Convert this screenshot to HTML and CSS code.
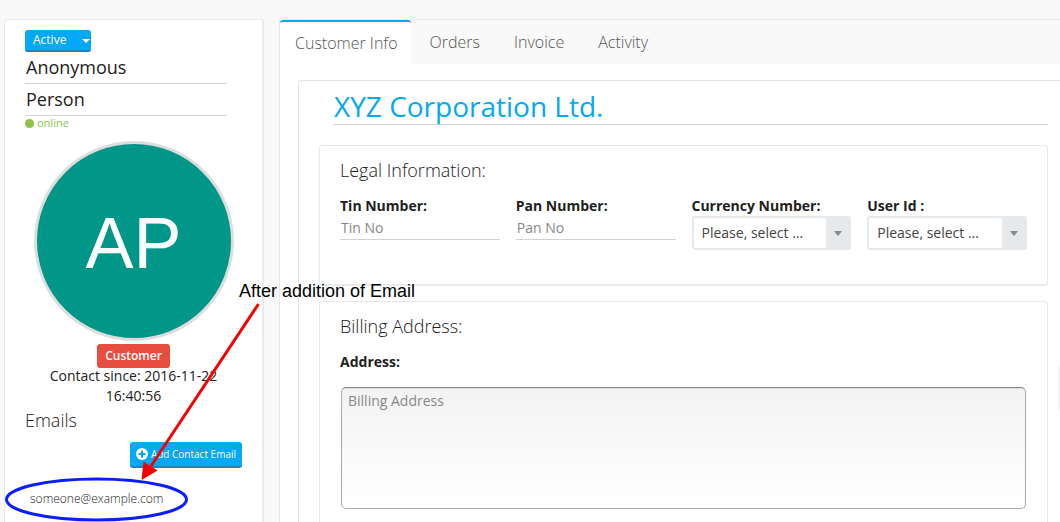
FILE: index.html
```html
<!DOCTYPE html>
<html lang="en">
<head>
<meta charset="utf-8">
<meta name="viewport" content="width=device-width, initial-scale=1">
<title>Customer Info</title>
<link rel="stylesheet" href="styles.css">
</head>
<body>
<div class="page">
  <aside class="profile">
    <button class="status" type="button">
      <span class="status-label">Active</span>
      <span class="status-toggle"><svg width="8" height="4" viewBox="0 0 8 4" aria-hidden="true"><path d="M0 0h8L4 4z" fill="#fff"/></svg></span>
    </button>
    <div class="names">
      <input class="line-input name" type="text" aria-label="First name" value="Anonymous">
      <input class="line-input name" type="text" aria-label="Last name" value="Person">
    </div>
    <div class="presence"><span class="dot"></span>online</div>
    <div class="avatar">AP</div>
    <span class="badge">Customer</span>
    <p class="since">Contact since: 2016-11-22 16:40:56</p>
    <h2 class="section-title">Emails</h2>
    <button class="add-email" type="button">
      <svg width="12" height="12" viewBox="0 0 12 12" aria-hidden="true"><circle cx="6" cy="6" r="6" fill="#fff"/><path d="M6 2.6v6.8M2.6 6h6.8" stroke="#03a9f4" stroke-width="2"/></svg>
      Add Contact Email
    </button>
    <a class="email" href="mailto:someone@example.com">someone@example.com</a>
  </aside>

  <main class="main">
    <nav class="tabs">
      <a class="tab active" href="#info">Customer Info</a>
      <a class="tab" href="#orders">Orders</a>
      <a class="tab" href="#invoice">Invoice</a>
      <a class="tab" href="#activity">Activity</a>
    </nav>
    <div class="panel" id="info">
      <input class="line-input company" type="text" aria-label="Company" value="XYZ Corporation Ltd.">
      <section class="card legal">
        <h2 class="section-title">Legal Information:</h2>
        <div class="fields">
          <div class="field">
            <label for="tin">Tin Number:</label>
            <input class="line-input" id="tin" type="text" placeholder="Tin No">
          </div>
          <div class="field">
            <label for="pan">Pan Number:</label>
            <input class="line-input" id="pan" type="text" placeholder="Pan No">
          </div>
          <div class="field">
            <label for="currency">Currency Number:</label>
            <div class="select-box"><select id="currency"><option>Please, select ...</option></select></div>
          </div>
          <div class="field">
            <label for="user">User Id :</label>
            <div class="select-box"><select id="user"><option>Please, select ...</option></select></div>
          </div>
        </div>
      </section>
      <section class="card billing">
        <h2 class="section-title">Billing Address:</h2>
        <label for="address">Address:</label>
        <textarea id="address" placeholder="Billing Address"></textarea>
      </section>
    </div>
  </main>

  <svg class="marks" width="270" height="522" viewBox="0 0 270 522" aria-hidden="true">
    <path d="M258.500 304L151 466" stroke="#f60000" stroke-width="3" fill="none"/>
    <path d="M141.500 480L143.500 461.500L157.500 470.500z" fill="#f60000"/>
    <ellipse cx="96.500" cy="499.500" rx="90" ry="20.500" fill="none" stroke="#0a1eff" stroke-width="3"/>
  </svg>
  <span class="note">After addition of Email</span>
  <div class="side-handle"></div>
</div>
</body>
</html>
```
FILE: styles.css
```css
* { box-sizing: border-box; }

body {
  margin: 0;
  background: #f9f9f9;
  color: #212121;
  font: 14px/20px "Open Sans", "Noto Sans", sans-serif;
}

button, input, select, textarea { font: inherit; color: inherit; }
a { color: inherit; text-decoration: none; }

.page {
  position: relative;
  display: flex;
  align-items: stretch;
  gap: 15px;
  min-height: 100vh;
  padding: 19px 0 0 4px;
  overflow: hidden;
}

.profile {
  display: flex;
  flex-direction: column;
  flex: 0 0 260px;
  padding: 10px 20px 0;
  background: #fff;
  border: 1px solid #e7eaec;
  border-right-width: 2px;
  border-bottom: 0;
  border-radius: 3px 3px 0 0;
}

.status {
  display: flex;
  align-self: flex-start;
  height: 22px;
  padding: 0;
  border: 0;
  border-radius: 3px;
  overflow: hidden;
  background: #03a9f4;
  color: #fff;
  font-size: 12px;
  line-height: 20px;
}
.status-label {
  width: 50px;
  height: 22px;
  padding-left: 8px;
  text-align: left;
  border-bottom: 2px solid #2980b9;
}
.status-toggle {
  display: flex;
  align-items: center;
  justify-content: flex-end;
  width: 16px;
  height: 22px;
  padding: 2px 1px 0 0;
  border-bottom: 2px solid #2980b9;
}

.line-input {
  width: 100%;
  height: 24px;
  padding: 0 1px 1px;
  border: 0;
  border-bottom: 1px solid #d3d3d3;
  background: transparent;
}
.names { display: flex; flex-direction: column; width: 202px; }
.name { height: 32px; padding-bottom: 2px; font-size: 18px; }

.presence {
  display: flex;
  align-items: center;
  gap: 3px;
  height: 14px;
  color: #8bc34a;
  font-size: 11px;
}
.dot { width: 9px; height: 9px; border-radius: 50%; background: #8bc34a; }

.avatar {
  display: flex;
  align-items: center;
  justify-content: center;
  align-self: center;
  width: 200px;
  height: 200px;
  margin: 11px 0 3px;
  padding-top: 4px;
  border: 3px solid #ddd;
  border-radius: 50%;
  background: #009688;
  color: #fff;
  font: 72px/80px "Liberation Sans", Arial, sans-serif;
}

.badge {
  align-self: center;
  padding: 2px 8px;
  border-radius: 3px;
  background: #e84e40;
  color: #fff;
  font-size: 12px;
  font-weight: 600;
}
.since { margin: -2px 0 0; padding: 0 12px; text-align: center; }

.section-title {
  margin: 0;
  font-size: 18px;
  font-weight: 300;
  line-height: 24px;
}
.profile .section-title { margin: 2px 0 10px; }

.add-email {
  display: flex;
  align-items: center;
  align-self: flex-end;
  gap: 3px;
  height: 26px;
  padding: 0 6px;
  border: 0;
  border-bottom: 2px solid #2980b9;
  border-radius: 3px;
  background: #03a9f4;
  color: #fff;
  font-size: 10px;
}
.email {
  margin: 21px 0 12px 5px;
  font-size: 12px;
  font-weight: 300;
}

.main {
  flex: 1;
  min-width: 0;
  background: #fff;
  border: 1px solid #e7e7e7;
  border-width: 1px 0 0 1px;
  border-radius: 3px 0 0 0;
}
.tabs { display: flex; height: 44px; background: #f9f9f9; }
.tab {
  padding: 0 17px;
  color: #555;
  font-size: 16px;
  font-weight: 300;
  line-height: 44px;
}
.tab.active {
  padding: 0 13px 0 15px;
  margin-right: 2px;
  border-top: 2px solid #03a9f4;
  border-radius: 3px 3px 0 0;
  background: #fff;
  line-height: 42px;
}

.panel {
  margin: 16px 0 0 18px;
  padding: 6px 12px 0 20px;
  border: 1px solid #e1e5eb;
  border-width: 1px 0 0 1px;
  border-radius: 3px 0 0 0;
}
.company {
  display: block;
  width: calc(100% - 14px);
  height: 38px;
  margin-left: 14px;
  padding-bottom: 0;
  color: #03a9f4;
  font-size: 28px;
}

.card {
  margin-top: 20px;
  padding: 12px 20px 0;
  border: 1px solid #e7eaec;
  border-radius: 3px;
  background: #fff;
}
.legal { padding-bottom: 34px; box-shadow: 0 1px 1px #e7eaec; }
.billing { margin-top: 16px; padding-bottom: 20px; }

label { display: block; font-weight: 700; }
.fields {
  display: grid;
  grid-template-columns: repeat(4, minmax(0, 1fr));
  gap: 16px;
  margin-top: 14px;
}
.field .line-input { display: block; padding-bottom: 0; }
::placeholder { color: #888; opacity: 1; }

.select-box { position: relative; }
.select-box select {
  display: block;
  width: 100%;
  height: 34px;
  padding: 0 26px 0 8px;
  border: 2px solid #e5e9ec;
  border-radius: 3px;
  appearance: none;
  background: linear-gradient(#e5e9ec, #e5e9ec) right / 23px 100% no-repeat #fff;
  color: #444;
}
.select-box::after {
  content: "";
  position: absolute;
  right: 9px;
  top: 15px;
  border: 4px solid transparent;
  border-top: 5px solid #888;
  border-bottom: 0;
  pointer-events: none;
}

.billing label { margin-top: 14px; }
textarea {
  display: block;
  width: calc(100% - 2px);
  height: 122px;
  margin: 15px 1px 0;
  padding: 3px 6px;
  border: 1px solid #aaa;
  border-top-color: #888;
  border-radius: 5px;
  background: linear-gradient(#f3f3f3, #fff);
  box-shadow: inset 0 1px 1px #ddd;
  resize: none;
}

.marks { position: absolute; left: 0; top: 0; pointer-events: none; }
.note {
  position: absolute;
  left: 239px;
  top: 281px;
  color: #000;
  font: 18px/20px "Liberation Sans", Arial, sans-serif;
  white-space: nowrap;
}
.side-handle {
  position: absolute;
  right: -2px;
  top: 365px;
  width: 2px;
  height: 46px;
  box-shadow: 0 0 3px #ccc;
}
```
